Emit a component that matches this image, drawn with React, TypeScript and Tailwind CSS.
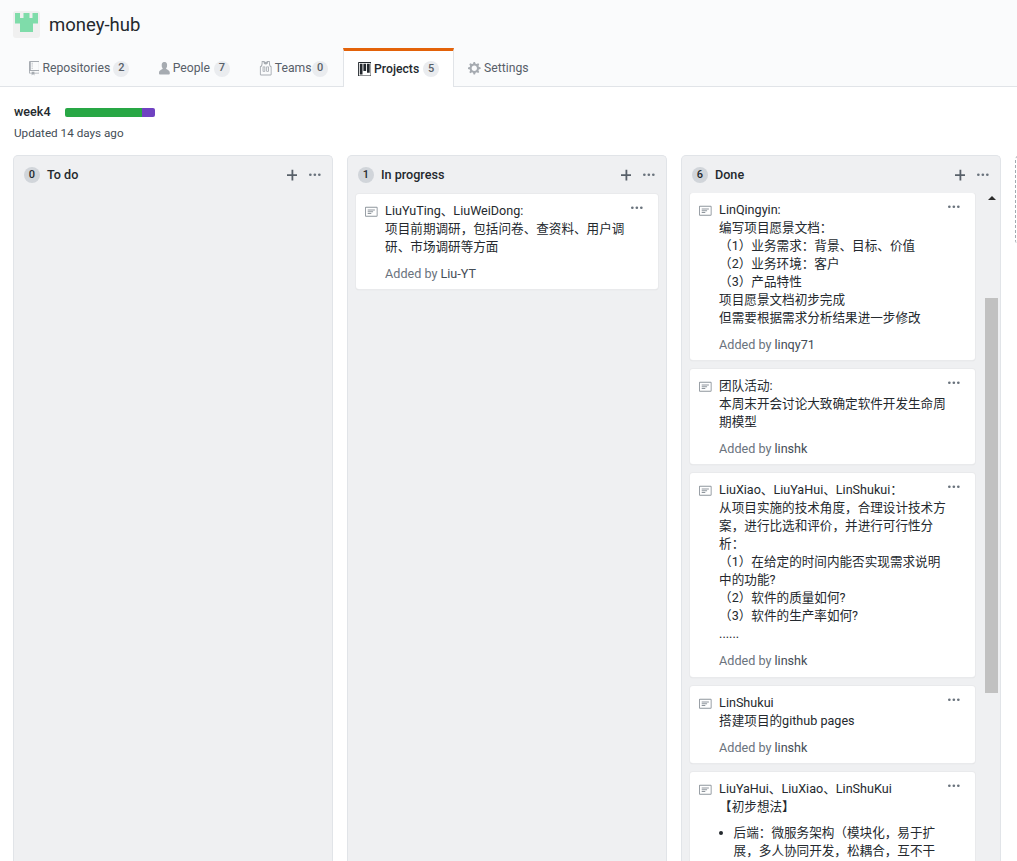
import type { ReactNode } from "react";

const FONT = "font-['Roboto','Noto_Sans_CJK_SC',sans-serif]";

// octicons, drawn by hand since the icon packages' versions have different strokes
const RepoIcon = () => (
  <svg viewBox="0 0 12 16" className="h-[14.4px] w-[10.8px] fill-[#a6abb1]">
    <path d="M4 9H3V8h1v1zm0-3H3v1h1V6zm0-2H3v1h1V4zm0-2H3v1h1V2zm8-1v12c0 .55-.45 1-1 1H6v2l-1.5-1.5L3 16v-2H1c-.55 0-1-.45-1-1V1c0-.55.45-1 1-1h10c.55 0 1 .45 1 1zm-1 10H1v2h2v-1h3v1h5v-2zm0-10H2v9h9V1z" />
  </svg>
);
const PersonIcon = () => (
  <svg viewBox="0 0 12 16" className="h-[14.4px] w-[10.8px] fill-[#a6abb1]">
    <path d="M12 14.002a.998.998 0 0 1-.998.998H1.001A1 1 0 0 1 0 13.999V13c0-2.633 4-4 4-4s.229-.409 0-1c-.841-.62-.944-1.59-1-4 .173-2.413 1.867-3 3-3s2.827.586 3 3c-.056 2.41-.159 3.38-1 4-.229.59 0 1 0 1s4 1.367 4 4v1.002z" />
  </svg>
);
const JerseyIcon = () => (
  <svg viewBox="0 0 14 16" className="h-[14.4px] w-[12.6px] fill-[#a6abb1]">
    <path d="M4.5 6l-.5.5v5l.5.5h2l.5-.5v-5L6.5 6h-2zM6 11H5V7h1v4zm6.27-7.25C12.05 2.37 11.96 1.12 12 0H9.02c0 .27-.13.48-.39.69-.25.2-.63.3-1.13.3-.5 0-.88-.09-1.13-.3-.23-.2-.36-.42-.36-.69H3c.05 1.13-.03 2.38-.25 3.75C2.55 5.13 1.95 5.88 1 6v9c.02.27.11.48.31.69.2.21.42.3.69.31h11c.27-.02.48-.11.69-.31.21-.2.3-.42.31-.69V6c-.95-.13-1.53-.88-1.75-2.25h.02zM13 15H2V7c.89-.5 1.48-1.25 1.72-2.25S4.03 2.5 4 1h1c-.02.78.16 1.47.52 2.06.36.58 1.02.89 2 .94.98-.02 1.64-.33 2-.94.36-.59.5-1.28.48-2.06h1c.02 1.42.13 2.55.33 3.38.2.81.69 2 1.67 2.63v8V15zM8.5 6l-.5.5v5l.5.5h2l.5-.5v-5l-.5-.5h-2zm1.5 5H9V7h1v4z" />
  </svg>
);
const ProjectIcon = () => (
  <svg viewBox="0 0 15 16" className="h-[14.4px] w-[13.5px] fill-[#24292e]">
    <path
      fillRule="evenodd"
      d="M10 12h3V2h-3v10zm-4-2h3V2H6v8zm-4 4h3V2H2v12zm-1 1h13V1H1v14zM14 0H1a1 1 0 0 0-1 1v14a1 1 0 0 0 1 1h13a1 1 0 0 0 1-1V1a1 1 0 0 0-1-1z"
    />
  </svg>
);
const GearIcon = () => (
  <svg viewBox="0 0 14 16" className="h-[14.4px] w-[12.6px] fill-[#a6abb1]">
    <path d="M14 8.77v-1.6l-1.94-.64-.45-1.09.88-1.84-1.13-1.13-1.81.91-1.09-.45-.69-1.92h-1.6l-.63 1.94-1.11.45-1.84-.88-1.13 1.13.91 1.81-.45 1.09L0 7.23v1.59l1.94.64.45 1.09-.88 1.84 1.13 1.13 1.81-.91 1.09.45.69 1.92h1.59l.63-1.94 1.11-.45 1.84.88 1.13-1.13-.92-1.81.47-1.09L14 8.75v.02zM7 11c-1.66 0-3-1.34-3-3s1.34-3 3-3 3 1.34 3 3-1.34 3-3 3z" />
  </svg>
);
const NoteIcon = () => (
  <svg viewBox="0 0 14 16" className="mt-[3px] h-[14.4px] w-[12.6px] shrink-0 fill-[#8f969d]">
    <path d="M3 10h4V9H3v1zm0-2h6V7H3v1zm0-2h8V5H3v1zm10 6H1V3h12v9zM1 2c-.55 0-1 .45-1 1v9c0 .55.45 1 1 1h12c.55 0 1-.45 1-1V3c0-.55-.45-1-1-1H1z" />
  </svg>
);
const Kebab = ({ className }: { className: string }) => (
  <svg viewBox="0 0 13 16" className={`h-[14.4px] w-[11.7px] fill-[#6a737d] ${className}`}>
    <path d="M1.5 9a1.5 1.5 0 1 0 0-3 1.5 1.5 0 0 0 0 3zm5 0a1.5 1.5 0 1 0 0-3 1.5 1.5 0 0 0 0 3zM13 7.5a1.5 1.5 0 1 1-3 0 1.5 1.5 0 0 1 3 0z" />
  </svg>
);
const PlusIcon = () => (
  <svg viewBox="0 0 12 16" className="h-[14.4px] w-[10.8px] fill-[#586069]">
    <path d="M12 9H7v5H5V9H0V7h5V2h2v5h5v2z" />
  </svg>
);

const Identicon = () => (
  <div className="flex h-[27px] w-[27px] justify-center rounded-[3px] bg-[#f0f0f0] pt-[2px]">
    <svg viewBox="0 0 23 19" className="h-[19px] w-[23px] fill-[#7fdcaa]">
      <path d="M0 0h5v5h3.5V0h6v5h3V0h5.5v10.5h-5V19h-13V10.5H0z" />
    </svg>
  </div>
);

const tabs = [
  { label: "Repositories", width: "w-[68px]", count: 2, icon: <RepoIcon /> },
  { label: "People", width: "w-[38.2px]", count: 7, icon: <PersonIcon /> },
  { label: "Teams", width: "w-[34.4px]", count: 0, icon: <JerseyIcon /> },
  { label: "Projects", width: "w-[46px]", count: 5, icon: <ProjectIcon />, selected: true },
  { label: "Settings", width: "w-[46px]", icon: <GearIcon /> },
];

function Tab({
  label,
  width,
  count,
  icon,
  selected,
}: {
  label: string;
  width: string;
  count?: number;
  icon: ReactNode;
  selected?: boolean;
}) {
  return (
    <div
      className={`flex h-[39px] items-center gap-[3px] border-x px-[13.7px] text-[12.2px] ${
        selected
          ? "border-x-[#e1e4e8] border-t-[3px] border-t-[#e36209] bg-white font-medium text-[#24292e]"
          : "border-x-transparent pt-[2px] text-[#586069]"
      }`}
    >
      {icon}
      <span className={`${width} whitespace-nowrap`}>{label}</span>
      {count !== undefined && (
        <span className="flex h-4 w-4 items-center justify-center rounded-full bg-[#eaecef] text-[11px] font-medium text-[#586069]">
          {count}
        </span>
      )}
    </div>
  );
}

function Card({ lines, by, children }: { lines: string[]; by?: string; children?: ReactNode }) {
  return (
    <div className="relative flex gap-[7.5px] rounded-[3px] bg-white pb-[6.3px] pl-[9px] pr-[23px] pt-2 shadow-[0_1px_1px_rgba(27,31,35,0.15)] ring-1 ring-[#e9eaec]">
      <NoteIcon />
      <div className="min-w-0 flex-1 text-[12.6px] leading-[18px] text-[#24292e]">
        {lines.map((l) => (
          <p key={l}>{l}</p>
        ))}
        {children}
        {by && (
          <p className="mt-[9px] text-[#6a737d]">
            Added by <span className="text-[#444d56]">{by}</span>
          </p>
        )}
      </div>
      <Kebab className="absolute right-[15px] top-[7px]" />
    </div>
  );
}

function Column({ count, title, children }: { count: number; title: string; children?: ReactNode }) {
  return (
    <section className="flex w-80 shrink-0 flex-col rounded-t-[5px] border border-b-0 border-[#e1e4e8] bg-[#eff0f2]">
      <header className="flex h-[37px] shrink-0 items-center pl-[10px] pr-[11px] pt-px">
        <span className="flex h-4 w-4 items-center justify-center rounded-full bg-[#d1d5da] text-[11px] font-medium text-[#24292e]">
          {count}
        </span>
        <h3 className="ml-[7px] flex-1 text-[12.6px] font-medium text-[#24292e]">{title}</h3>
        <PlusIcon />
        <Kebab className="ml-[12px]" />
      </header>
      {children}
    </section>
  );
}

export default function App() {
  return (
    <div className={`flex h-[861px] flex-col overflow-hidden bg-white ${FONT}`}>
      <div className="shrink-0 border-b border-[#e1e4e8] bg-[#fafbfc]">
        <div className="flex items-center gap-[9px] pl-[13px] pt-[11px]">
          <Identicon />
          <h1 className="pt-px text-[18.5px] leading-[26px] text-[#24292e]">money-hub</h1>
        </div>
        <nav className="-mb-px mt-[10px] flex pl-[14px]">
          {tabs.map((t) => (
            <Tab key={t.label} {...t} />
          ))}
        </nav>
      </div>

      <div className="flex shrink-0 items-center pl-[14px] pt-[16px]">
        <span className="w-[51px] text-[12.6px] font-medium leading-[18px] text-[#24292e]">week4</span>
        <div className="flex h-[9px] w-[90px] overflow-hidden rounded-[2px]">
          <div className="w-[77px] bg-[#28a745]" />
          <div className="flex-1 bg-[#6f42c1]" />
        </div>
      </div>
      <p className="shrink-0 pl-[14px] pt-[3px] text-[11.7px] leading-[18px] text-[#444d56]">Updated 14 days ago</p>

      <div className="mt-[13px] flex min-h-0 flex-1 gap-[14px] pl-[13px]">
        <Column count={0} title="To do" />
        <Column count={1} title="In progress">
          <div className="px-2 pt-px">
            <Card
              lines={["LiuYuTing、LiuWeiDong:", "项目前期调研，包括问卷、查资料、用户调研、市场调研等方面"]}
              by="Liu-YT"
            />
          </div>
        </Column>
        <Column count={6} title="Done">
          <div className="flex min-h-0 flex-1 overflow-hidden">
            <div className="ml-2 flex w-[285px] shrink-0 flex-col gap-[8.9px]">
              <Card
                lines={[
                  "LinQingyin:",
                  "编写项目愿景文档：",
                  "（1）业务需求：背景、目标、价值",
                  "（2）业务环境：客户",
                  "（3）产品特性",
                  "项目愿景文档初步完成",
                  "但需要根据需求分析结果进一步修改",
                ]}
                by="linqy71"
              />
              <Card lines={["团队活动:", "本周末开会讨论大致确定软件开发生命周期模型"]} by="linshk" />
              <Card
                lines={[
                  "LiuXiao、LiuYaHui、LinShukui：",
                  "从项目实施的技术角度，合理设计技术方案，进行比选和评价，并进行可行性分析：",
                  "（1）在给定的时间内能否实现需求说明中的功能?",
                  "（2）软件的质量如何?",
                  "（3）软件的生产率如何?",
                  "......",
                ]}
                by="linshk"
              />
              <Card lines={["LinShukui", "搭建项目的github pages"]} by="linshk" />
              <Card lines={["LiuYaHui、LiuXiao、LinShuKui", "【初步想法】"]}>
                <ul className="mt-[8px] list-disc pl-[14.5px] marker:text-[#24292e]">
                  <li>后端：微服务架构（模块化，易于扩展，多人协同开发，松耦合，互不干</li>
                </ul>
              </Card>
            </div>
            {/* fake scrollbar of the Done column */}
            <div className="ml-[10px] flex w-[13px] shrink-0 flex-col items-center">
              <div className="mt-[3px] h-0 w-0 border-x-[4px] border-b-[4px] border-x-transparent border-b-[#2b2b2b]" />
              <div className="mt-[98px] h-[395px] w-full bg-[#c1c1c1]" />
            </div>
          </div>
        </Column>
        <div className="h-[90px] w-80 shrink-0 rounded-[5px] border border-dashed border-[#a3aab1]" />
      </div>
    </div>
  );
}
